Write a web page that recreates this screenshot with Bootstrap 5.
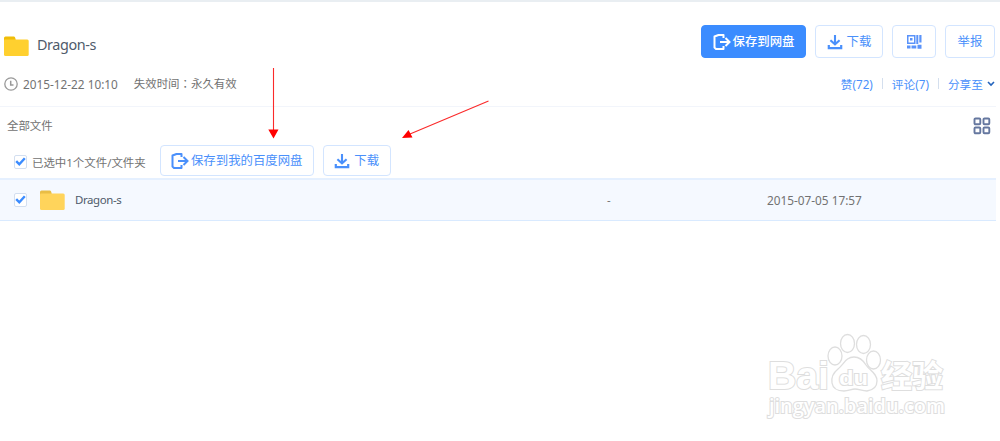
<!DOCTYPE html>
<html lang="zh-CN">
<head>
  <meta charset="UTF-8" />
  <meta name="viewport" content="width=device-width, initial-scale=1" />
  <title>Dragon-s</title>
  <link href="https://cdn.jsdelivr.net/npm/bootstrap@5.3.0/dist/css/bootstrap.min.css" rel="stylesheet">
  <style>
    body {
      font-family: "Noto Sans", "Noto Sans CJK SC", sans-serif;
      font-size: 11.45px;
      line-height: 16px;
      color: #727272;
      height: 441px;
      overflow: hidden;
    }
    svg { display: block; flex: none; }
    .top-line { height: 2px; background: #e9eef2; }
    .page { width: 996px; }
    .share-head { height: 59px; padding: 23px 1px 0 4px; }
    .share-title { font-size: 14.4px; letter-spacing: -.4px; color: #4f5b6b; margin-left: 8px; padding-top: 12px; }
    .head-folder { margin-top: 11px; }
    .pan-btn {
      --bs-btn-padding-x: 0;
      --bs-btn-padding-y: 0;
      --bs-btn-font-size: 12.4px;
      --bs-btn-line-height: 16px;
      --bs-btn-color: #4a90fb;
      --bs-btn-bg: #fff;
      --bs-btn-border-color: #d3e5ff;
      --bs-btn-border-radius: 4px;
      --bs-btn-hover-color: #3b8cff;
      --bs-btn-hover-bg: #f5f9ff;
      --bs-btn-hover-border-color: #a8ccff;
      height: 33px;
      white-space: nowrap;
    }
    .pan-btn.solid {
      --bs-btn-color: #fff;
      --bs-btn-bg: #3b8cff;
      --bs-btn-border-color: #3b8cff;
      font-weight: 500;
    }
    .icon-gap { gap: 2px; }
    .w-save { width: 105px; }
    .w-down { width: 68px; }
    .w-code { width: 44px; }
    .w-report { width: 50px; }
    .w-mine { width: 154px; margin-left: 14px; }
    .head-btns { gap: 9px; }
    .meta { height: 46px; padding: 0 1px 0 4px; border-bottom: 1px solid #f2f5fb; }
    .date { font-size: 11.8px; }
    .meta .date { margin-left: 5px; }
    .colon { font-family: "Noto Sans CJK TC", sans-serif; }
    .meta-links { color: #4a90fb; font-size: 11.7px; }
    .sep { width: 1px; height: 11px; background: #d4dfee; margin: 0 9px; }
    .crumb { height: 38px; padding: 0 5px 0 7px; }
    .tools { height: 33px; padding-left: 14px; }
    .tools .pan-btn { height: 31px; margin-bottom: 2px; }
    .tools .w-down { margin-left: 9px; }
    .picked { margin-left: 5px; padding-top: 3px; }
    .check {
      width: 13px;
      height: 14px;
      border: 1px solid #d3dff0;
      border-radius: 2px;
      background: #fff;
    }
    .file-row {
      height: 43px;
      padding-left: 14px;
      background: #f5f9ff;
      border-top: 2px solid #e5f0ff;
      border-bottom: 1px solid #d9eaff;
    }
    .row-folder { margin-left: 13px; }
    .file-name { width: 532px; margin-left: 10px; color: #4f5b6b; letter-spacing: -.4px; }
    .file-size { width: 160px; }
    .arrows { position: absolute; left: 0; top: 0; pointer-events: none; }
    .watermark { position: absolute; left: 760px; top: 325px; }
    .watermark text { font-family: "Open Sans", "Noto Sans CJK SC", sans-serif; paint-order: stroke; stroke-width: 2px; }
    .watermark .wm-bai { font-family: "Liberation Sans", sans-serif; }
  </style>
</head>
<body class="position-relative">

<!-- Iconos compartidos -->
<svg width="0" height="0" class="position-absolute">
  <symbol id="i-save" viewBox="0 0 18 16">
    <path d="M10.500 4V1H5.500L1.500 2.500V13.500L3 15H10.500V12" fill="none" stroke="currentColor" stroke-width="2" stroke-linejoin="round"/>
    <path d="M7 8H16M12.500 4L16.500 8L12.500 12" fill="none" stroke="currentColor" stroke-width="2"/>
  </symbol>
  <symbol id="i-down" viewBox="0 0 16 16">
    <path d="M8 1V10M3.400 6.200L8 10.400L12.600 6.200" fill="none" stroke="currentColor" stroke-width="2.100"/>
    <path d="M1.800 11V14.200H14.200V11" fill="none" stroke="currentColor" stroke-width="2.200"/>
  </symbol>
  <symbol id="i-folder" viewBox="0 0 25 21">
    <path d="M0 10V2Q0 .5 1.500 .5H10Q11 .5 11.300 2L12 5V10Z" fill="var(--tab)"/>
    <path d="M0 4.500Q0 3.500 1 3.500H23.300Q24.700 3.500 24.700 5V18.500Q24.700 20 23.300 20H1.500Q0 20 0 18.500Z" fill="var(--front)"/>
  </symbol>
  <symbol id="i-tick" viewBox="0 0 11 11">
    <path d="M1.200 5.200L4.300 8.300L9.800 2.300" fill="none" stroke="#3b8cff" stroke-width="2.400"/>
  </symbol>
</svg>

<div class="top-line"></div>
<main class="page">
  <header class="share-head d-flex justify-content-between">
    <div class="d-flex align-items-start">
      <svg class="head-folder" style="--tab:#f0bd08;--front:#ffd02f" width="25" height="21"><use href="#i-folder"/></svg>
      <div class="share-title">Dragon-s</div>
    </div>
    <div class="head-btns d-flex">
      <button class="btn pan-btn solid w-save d-flex align-items-center justify-content-center icon-gap"><svg width="18" height="16"><use href="#i-save"/></svg>保存到网盘</button>
      <button class="btn pan-btn w-down d-flex align-items-center justify-content-center gap-1"><svg width="16" height="16"><use href="#i-down"/></svg>下载</button>
      <button class="btn pan-btn w-code d-flex align-items-center justify-content-center" aria-label="二维码">
        <svg width="15" height="14" viewBox="0 0 15 14" fill="#5a93fa">
          <path d="M0 0H8.500V9H0ZM1.500 1.500V7.500H7V1.500Z" fill-rule="evenodd"/>
          <path d="M3 3H5.500V5.500H3ZM9.300 0H11.300V9H9.300ZM12.300 0H14.500V7.500H12.300ZM0 10.500H3.500V13.500H0ZM4.500 10.500H9.300V13.500H4.500ZM10.500 9.800H14.500V13.800H10.500Z"/>
        </svg>
      </button>
      <button class="btn pan-btn w-report">举报</button>
    </div>
  </header>

  <section class="meta d-flex align-items-center justify-content-between">
    <div class="d-flex align-items-center">
      <svg width="14" height="14" viewBox="0 0 14 14" fill="none" stroke="#999">
        <circle cx="7" cy="7" r="6.200" stroke-width="1.300"/>
        <path d="M6.700 3.800V8H9.500" stroke-width="1.500"/>
      </svg>
      <span class="date">2015-12-22 10:10</span>
      <span class="ms-3">失效时间<span class="colon" lang="zh-TW">：</span>永久有效</span>
    </div>
    <div class="meta-links d-flex align-items-center">
      <span>赞(72)</span><i class="sep"></i>
      <span>评论(7)</span><i class="sep"></i>
      <span>分享至</span>
      <svg class="ms-1" width="8" height="6" viewBox="0 0 8 6"><path d="M1 1L4 4L7 1" fill="none" stroke="#2464bd" stroke-width="1.600"/></svg>
    </div>
  </section>

  <section class="crumb d-flex align-items-center justify-content-between">
    <span>全部文件</span>
    <svg width="18" height="18" viewBox="0 0 18 18" fill="none" stroke="#65779f" stroke-width="1.900">
      <rect x="1.500" y="1.500" width="5.800" height="5.800" rx="1"/>
      <rect x="10.500" y="1.500" width="5.800" height="5.800" rx="1"/>
      <rect x="1.500" y="10.500" width="5.800" height="5.800" rx="1"/>
      <rect x="10.500" y="10.500" width="5.800" height="5.800" rx="1"/>
    </svg>
  </section>

  <section class="tools d-flex align-items-center">
    <span class="check"><svg width="11" height="11"><use href="#i-tick"/></svg></span>
    <span class="picked">已选中1个文件/文件夹</span>
    <button class="btn pan-btn w-mine d-flex align-items-center justify-content-center icon-gap"><svg width="18" height="16"><use href="#i-save"/></svg>保存到我的百度网盘</button>
    <button class="btn pan-btn w-down d-flex align-items-center justify-content-center gap-1"><svg width="16" height="16"><use href="#i-down"/></svg>下载</button>
  </section>

  <section class="file-row d-flex align-items-center">
    <span class="check"><svg width="11" height="11"><use href="#i-tick"/></svg></span>
    <svg class="row-folder" style="--tab:#e9bd45;--front:#ffd45b" width="25" height="21"><use href="#i-folder"/></svg>
    <span class="file-name">Dragon-s</span>
    <span class="file-size">-</span>
    <span class="date">2015-07-05 17:57</span>
  </section>
</main>

<!-- Flechas de ayuda -->
<svg class="arrows" width="500" height="145">
  <path d="M273.500 68V131M488.500 101L410 134" stroke="#fb2a2a" stroke-width="1.100" fill="none"/>
  <path d="M268.300 129.500H278.500L273.500 138.500ZM402 138L408.500 130L412.500 137.500Z" fill="#f00"/>
</svg>

<!-- Marca de agua -->
<svg class="watermark" width="195" height="100" viewBox="0 0 195 100" fill="#fff" stroke="#dedede" stroke-width="1.300">
  <text class="wm-bai" x="8" y="64" font-size="39" font-weight="700" textLength="61" lengthAdjust="spacingAndGlyphs">Bai</text>
  <ellipse cx="75" cy="31" rx="7" ry="9"/>
  <ellipse cx="87.500" cy="18.500" rx="7" ry="9"/>
  <ellipse cx="103.500" cy="19.500" rx="7" ry="9"/>
  <ellipse cx="113.500" cy="35" rx="7" ry="9"/>
  <path d="M94 32C86 32 84 39 78 44C73 48 71 52 72 58C73 64 78 66 84 66C89 66 91 64 95 64C99 64 102 66 107 66C113 65 117 62 117 56C117 48 110 46 106 40C103 35 100 32 94 32Z"/>
  <text class="wm-bai" x="79" y="60" font-size="21" font-weight="700" textLength="29" lengthAdjust="spacingAndGlyphs">du</text>
  <text x="121" y="62" font-size="31" font-weight="700" textLength="62" lengthAdjust="spacingAndGlyphs">经验</text>
  <text x="9" y="88" font-size="19" font-weight="600" textLength="176" lengthAdjust="spacingAndGlyphs">jingyan.baidu.com</text>
</svg>

<script src="https://cdn.jsdelivr.net/npm/bootstrap@5.3.0/dist/js/bootstrap.bundle.min.js"></script>
</body>
</html>
